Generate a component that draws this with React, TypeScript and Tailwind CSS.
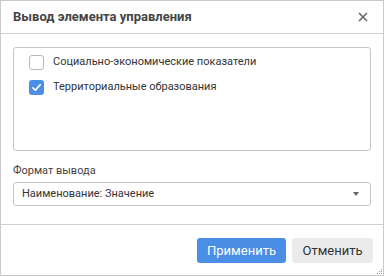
import { useState } from 'react'

interface CheckRowProps {
  label: string
  checked: boolean
  onToggle: () => void
}

function CheckRow({ label, checked, onToggle }: CheckRowProps) {
  return (
    <label className="flex h-[25px] cursor-pointer items-center gap-[9px]" onClick={onToggle}>
      <span
        className={
          checked
            ? 'flex h-[15px] w-[15px] items-center justify-center rounded-[3px] bg-[#4a8ee6]'
            : 'h-[15px] w-[15px] rounded-[3px] border border-[#b8b8b8] bg-white'
        }
      >
        {checked && (
          <svg width="11" height="11" viewBox="0 0 11 11" fill="none">
            <path d="M1.8 5.8 L4.3 8.2 L9.3 2.6" stroke="white" strokeWidth="1.6" strokeLinecap="round" strokeLinejoin="round" />
          </svg>
        )}
      </span>
      <span className="text-[11px] text-[#333]">{label}</span>
    </label>
  )
}

export default function App() {
  const [items, setItems] = useState([
    { label: 'Социально-экономические показатели', checked: false },
    { label: 'Территориальные образования', checked: true },
  ])

  const toggle = (idx: number) =>
    setItems(items.map((it, i) => (i === idx ? { ...it, checked: !it.checked } : it)))

  return (
    <div
      className="relative flex h-[276px] w-[384px] flex-col border border-[#c9c9c9] bg-white"
      style={{ fontFamily: 'Roboto, "Liberation Sans", sans-serif' }}
    >
      {/* Header */}
      <div className="flex h-[33px] shrink-0 items-center justify-between border-b border-[#d0d0d0] pl-[12px] pr-[15px]">
        <h3 className="text-[13px] font-bold text-[#444]">Вывод элемента управления</h3>
        <button type="button" aria-label="Закрыть" className="flex h-[10px] w-[10px] items-center justify-center">
          <svg width="10" height="10" viewBox="0 0 10 10">
            <path d="M1 1 L9 9 M9 1 L1 9" stroke="#666" strokeWidth="1.6" />
          </svg>
        </button>
      </div>

      {/* Body */}
      <div className="flex flex-1 flex-col px-[12px] pt-[13px]">
        <div className="h-[104px] rounded-[3px] border border-[#c6c6c6] pl-[15px] pt-[2px]">
          {items.map((it, i) => (
            <CheckRow key={it.label} label={it.label} checked={it.checked} onToggle={() => toggle(i)} />
          ))}
        </div>

        <div className="mt-[14px] text-[11px] leading-[12px] text-[#444]">Формат вывода</div>
        <div className="mt-[5px] flex h-[24px] items-center justify-between rounded-[3px] border border-[#c6c6c6] pl-[8px] pr-[11px]">
          <span className="text-[11px] text-[#333]">Наименование: Значение</span>
          <svg width="6" height="4" viewBox="0 0 6 4">
            <path d="M0 0 H6 L3 4 Z" fill="#666" />
          </svg>
        </div>
      </div>

      {/* Footer */}
      <div className="flex h-[51px] shrink-0 justify-end gap-[6px] border-t border-[#d0d0d0] pr-[10px] pt-[13px]">
        <button type="button" className="h-[25px] w-[89px] rounded-[3px] bg-[#4a8ee6] text-[13px] text-white">
          Применить
        </button>
        <button type="button" className="h-[25px] w-[81px] rounded-[3px] bg-[#ebebeb] text-[13px] text-[#333]">
          Отменить
        </button>
      </div>

      {/* Resize grip */}
      <svg className="absolute bottom-[1px] right-[1px]" width="5" height="5" viewBox="0 0 5 5">
        <rect x="4" y="0" width="1" height="1" fill="#999" />
        <rect x="2" y="2" width="1" height="1" fill="#999" />
        <rect x="4" y="2" width="1" height="1" fill="#999" />
        <rect x="0" y="4" width="1" height="1" fill="#999" />
        <rect x="2" y="4" width="1" height="1" fill="#999" />
        <rect x="4" y="4" width="1" height="1" fill="#999" />
      </svg>
    </div>
  )
}
